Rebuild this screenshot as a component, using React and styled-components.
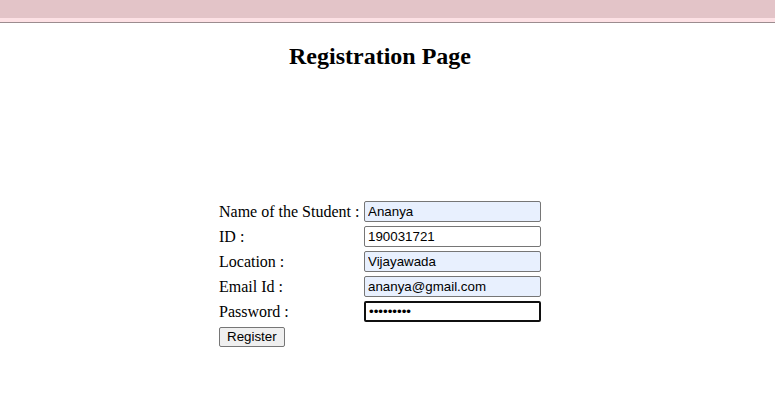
import React from 'react';
import styled, { createGlobalStyle } from 'styled-components';

const Global = createGlobalStyle`
  body {
    margin: 0;
    background: #ffffff;
    font-family: "Liberation Serif", "Times New Roman", serif;
  }
`;

const TopBar = styled.div`
  height: 18px;
  background: #e3c4c8;
`;

const TopStrip = styled.div`
  height: 4px;
  background: #fde1e5;
  border-bottom: 1px solid #9c8c8f;
`;

const Heading = styled.h2`
  margin: 20px 15px 0 0;
  text-align: center;
  font-size: 24px;
  font-weight: bold;
  color: #000;
`;

const Form = styled.form`
  margin: 129px 0 0 218px;
  display: grid;
  grid-template-columns: 146px 177px;
  grid-auto-rows: 25px;
  align-items: center;
`;

const Label = styled.label`
  font-size: 16px;
  color: #000;
  padding-left: 1px;
`;

const Field = styled.input`
  box-sizing: border-box;
  width: 177px;
  height: 21px;
  padding: 1px 3px;
  font-family: "Liberation Sans", Arial, sans-serif;
  font-size: 13.33px;
  color: #000;
  background: ${p => (p.$filled ? '#e8f0fe' : '#ffffff')};
  border: ${p => (p.$focused ? '2px solid #101010' : '1px solid #767676')};
  border-radius: 2px;
  outline: none;
`;

const Button = styled.button`
  grid-column: 1;
  justify-self: start;
  margin-left: 1px;
  height: 20px;
  padding: 1px 7px;
  font-family: "Liberation Sans", Arial, sans-serif;
  font-size: 13.33px;
  color: #000;
  background: #efefef;
  border: 1px solid #767676;
  border-radius: 2px;
`;

const rows = [
  { label: 'Name of the Student :', value: 'Ananya', filled: true },
  { label: 'ID :', value: '190031721' },
  { label: 'Location :', value: 'Vijayawada', filled: true },
  { label: 'Email Id :', value: 'ananya@gmail.com', filled: true },
  { label: 'Password :', value: '•••••••••', focused: true },
];

export default function App() {
  return (
    <>
      <Global />
      <TopBar />
      <TopStrip />
      <Heading>Registration Page</Heading>
      <Form onSubmit={e => e.preventDefault()}>
        {rows.map(r => (
          <React.Fragment key={r.label}>
            <Label>{r.label}</Label>
            <Field
              readOnly
              value={r.value}
              $filled={r.filled}
              $focused={r.focused}
            />
          </React.Fragment>
        ))}
        <Button type="submit">Register</Button>
      </Form>
    </>
  );
}
